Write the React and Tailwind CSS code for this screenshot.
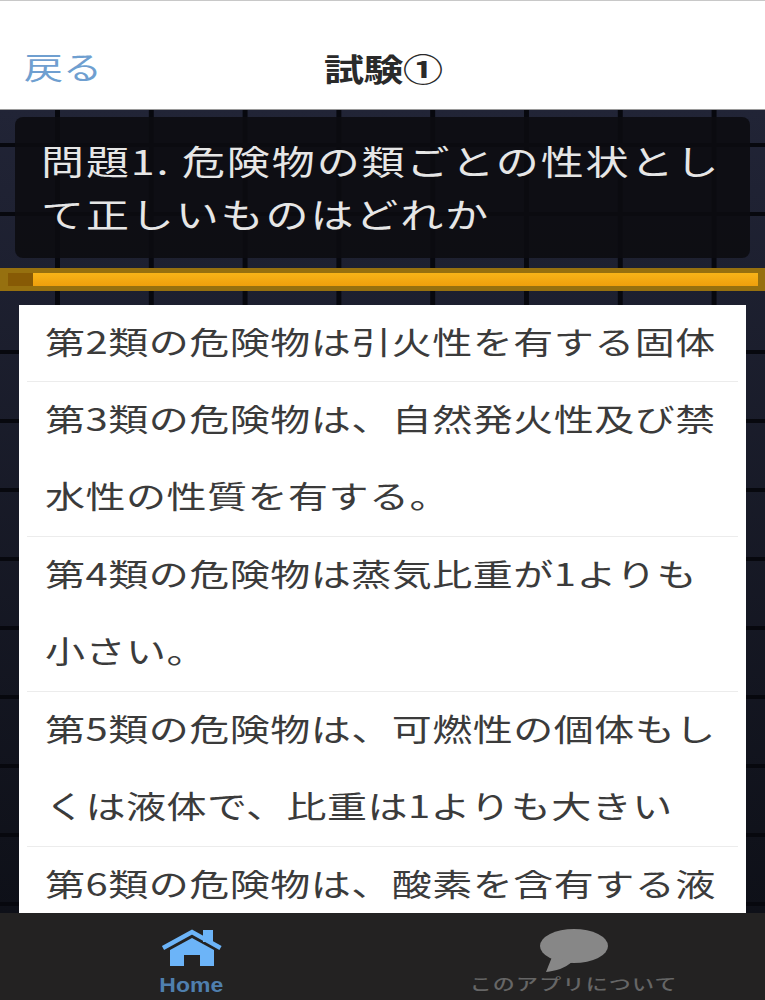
import React from 'react';

const answers = [
    ['第2類の危険物は引火性を有する固体'],
    ['第3類の危険物は、自然発火性及び禁', '水性の性質を有する。'],
    ['第4類の危険物は蒸気比重が1よりも', '小さい。'],
    ['第5類の危険物は、可燃性の個体もし', 'くは液体で、比重は1よりも大きい'],
    ['第6類の危険物は、酸素を含有する液'],
];

const HomeIcon = () => (
    <svg viewBox="0 0 61 37" className="h-[37px] w-[61px]">
        <rect x="42" y="1" width="10" height="12" fill="#6cb4f8" />
        <path d="M2 19 L31 3 L59.5 19" fill="none" stroke="#6cb4f8" strokeWidth="4.5" />
        <path d="M9 21 L31 9 L53 21 V37 H39 V26 H23 V37 H9 Z" fill="#6cb4f8" />
    </svg>
);

const ChatIcon = () => (
    <svg viewBox="0 0 68 43" className="h-[43px] w-[68px]">
        <ellipse cx="34" cy="17" rx="34" ry="17" fill="#878787" />
        <path d="M12 28 L6 43 C16 42 25 39 32 33 Z" fill="#878787" />
    </svg>
);

const App = () => {
    return (
        <div className="flex h-[1000px] w-[765px] flex-col overflow-hidden bg-[#1d2030] font-['Noto_Sans_CJK_JP',sans-serif]">
            <header className="flex h-[110px] shrink-0 items-center border-t border-b border-t-[#c8c8c8] border-b-[#9a9a9a] bg-white pt-[22px]">
                <span className="ml-[24px] w-[300px] scale-y-[0.78] text-[39px] text-[#6f9fd0]">戻る</span>
                <h1 className="mt-[3px] scale-y-[0.78] text-[40px] font-semibold tracking-[-0.5px] text-[#2a2a2a]">試験①</h1>
            </header>

            <main className="min-h-0 flex-1 overflow-hidden bg-[linear-gradient(90deg,#07080e_5px,transparent_5px),linear-gradient(0deg,#07080e_4px,transparent_4px),linear-gradient(180deg,#212436,#0e1018)] bg-[size:93.8px_69px,93.8px_69px,100%_100%] bg-[position:55px_37px,55px_37px,0_0]">
                <section className="mx-[15px] mt-[7px] h-[141px] rounded-lg bg-[#0c0c11]/90 px-[26px] pt-[17px] text-[43px] leading-[53px] tracking-[1.9px] text-[#e6e6e6]">
                    <p className="scale-y-[0.8] whitespace-nowrap">問題1. 危険物の類ごとの性状とし</p>
                    <p className="scale-y-[0.8] whitespace-nowrap">て正しいものはどれか</p>
                </section>

                <div className="mt-[10px] flex h-[23px] border-y-[3px] border-[#96700f] bg-[#96700f] pl-[8px] pr-[7px] py-[2px]">
                    <div className="h-full w-[25px] bg-[#875a05]" />
                    <div className="h-full flex-1 bg-[linear-gradient(180deg,#f8b418,#ee9f0c)]" />
                </div>

                <ul className="mx-[19px] mt-[14px] bg-white px-[8px]">
                    {answers.map((lines) => (
                        <li key={lines[0]} className="border-b border-[#ececec] pl-[18px] text-[40px] leading-[77px] tracking-[0.5px] text-[#3b3b3b] first:leading-[76px] last:border-b-0">
                            {lines.map((line) => (
                                <p key={line} className="-translate-y-[2px] scale-y-[0.78] whitespace-nowrap">{line}</p>
                            ))}
                        </li>
                    ))}
                </ul>
            </main>

            <footer className="grid h-[87px] shrink-0 grid-cols-2 bg-[#232222]">
                <div className="flex flex-col items-center pt-[16px]">
                    <HomeIcon />
                    <span className="mt-[7px] scale-y-[0.85] font-['Liberation_Sans',sans-serif] text-[23px] font-bold leading-[24px] text-[#4f7fae]">Home</span>
                </div>
                <div className="flex flex-col items-center pt-[16px]">
                    <ChatIcon />
                    <span className="-mt-[1px] scale-y-[0.72] whitespace-nowrap text-[22px] font-medium leading-[24px] tracking-[1.2px] text-[#666666]">このアプリについて</span>
                </div>
            </footer>
        </div>
    );
};

export default App;
